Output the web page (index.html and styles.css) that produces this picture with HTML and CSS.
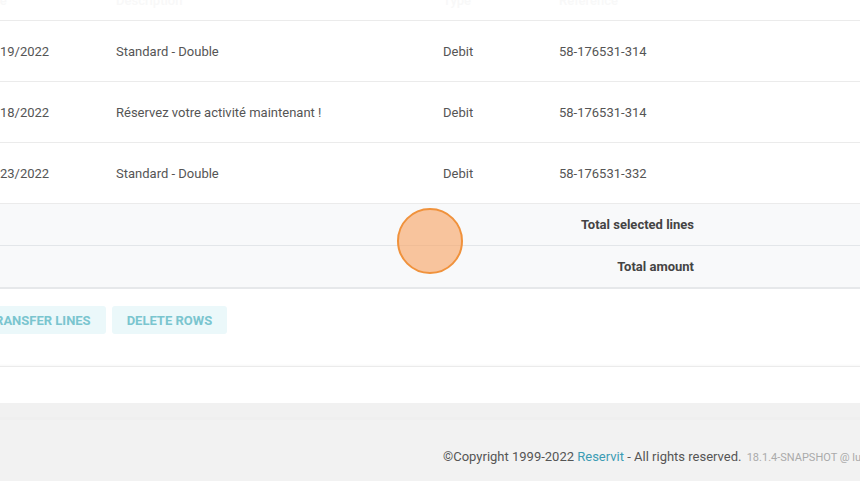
FILE: index.html
```html
<!DOCTYPE html>
<html lang="en">
<head>
  <meta charset="UTF-8" />
  <meta name="viewport" content="width=device-width, initial-scale=1.0"/>
  <title>Invoice lines</title>

  <link rel="stylesheet" href="styles.css">
</head>

<body>
  <div class="page">
    <div class="content">
      <div class="lines">
        <div class="row head">
          <div class="cell">Date</div>
          <div class="cell">Description</div>
          <div class="cell">Type</div>
          <div class="cell">Reference</div>
          <div class="cell"></div>
        </div>
        <div class="row">
          <div class="cell">05/19/2022</div>
          <div class="cell">Standard - Double</div>
          <div class="cell">Debit</div>
          <div class="cell">58-176531-314</div>
          <div class="cell"></div>
        </div>
        <div class="row">
          <div class="cell">05/18/2022</div>
          <div class="cell">Réservez votre activité maintenant !</div>
          <div class="cell">Debit</div>
          <div class="cell">58-176531-314</div>
          <div class="cell"></div>
        </div>
        <div class="row">
          <div class="cell">05/23/2022</div>
          <div class="cell">Standard - Double</div>
          <div class="cell">Debit</div>
          <div class="cell">58-176531-332</div>
          <div class="cell"></div>
        </div>

        <div class="totals">
          <div class="total-row">
            <div class="total-label">Total selected lines</div>
            <div class="total-value"></div>
          </div>
          <div class="total-row">
            <div class="total-label">Total amount</div>
            <div class="total-value"></div>
          </div>
        </div>
      </div>

      <div class="actions">
        <button class="btn-soft">Transfer lines</button>
        <button class="btn-soft">Delete rows</button>
      </div>

      <div class="card-end"></div>
    </div>

    <footer class="footer">
      <span>©Copyright 1999-2022 <a href="#">Reservit</a> - All rights reserved.</span>
      <span class="version">18.1.4-SNAPSHOT @ lum-app-02</span>
    </footer>
  </div>

  <!-- click marker -->
  <div class="click-dot"></div>
</body>
</html>
```

FILE: styles.css
```css
html, body {
  margin: 0;
  padding: 0;
  overflow: hidden;
}

body {
  font-family: Roboto, "Liberation Sans", Arial, sans-serif;
  font-size: 13px;
  color: #555;
  background: #f2f2f2;
  width: 860px;
  height: 481px;
}

.page {
  margin-left: -32px;
  width: 1100px;
}

.content {
  background: #fff;
}

/* Lines table */
.lines {
  margin-top: -20px;
}

.row {
  display: grid;
  grid-template-columns: 136px 327px 116px 200px 1fr;
  height: 60px;
  border-bottom: 1px solid #ebebeb;
  align-items: center;
}

.row.head {
  height: 40px;
  color: #f8f8f8;
  font-weight: 500;
}

.cell {
  padding: 0 12px;
  white-space: nowrap;
}

.totals {
  background: #f8f9fa;
  border-bottom: 2px solid #e6e8ea;
}

.total-row {
  display: grid;
  grid-template-columns: 738px 1fr;
  height: 41px;
  align-items: center;
  font-weight: 700;
  color: #444;
}

.total-row + .total-row {
  border-top: 1px solid #e3e6e9;
}

.total-label {
  text-align: right;
  padding-right: 12px;
}

/* Action buttons */
.actions {
  display: flex;
  gap: 6px;
  padding: 17px 0 32px 4px;
}

.btn-soft {
  font-family: inherit;
  font-size: 13px;
  font-weight: 700;
  text-transform: uppercase;
  color: #7ac5cf;
  background: #ebf8fa;
  border: none;
  border-radius: 3px;
  height: 28px;
  padding: 0 15px;
  cursor: pointer;
}

.card-end {
  border-top: 1px solid #ebebeb;
  height: 36px;
  box-shadow: 0 -1px 2px rgba(0, 0, 0, 0.03);
}

/* Footer */
.footer {
  border-top: 14px solid #f1f1f1;
  box-shadow: inset 0 3px 0 #efefef;
  padding: 32px 0 20px 475px;
  white-space: nowrap;
  color: #555;
  font-size: 13px;
}

.footer a {
  color: #3c9cb4;
  text-decoration: none;
}

.version {
  font-size: 11px;
  color: #aaa;
  margin-left: 2px;
}

.click-dot {
  position: absolute;
  left: 397px;
  top: 208px;
  width: 62px;
  height: 62px;
  border-radius: 50%;
  background: rgba(247, 168, 108, 0.65);
  border: 2px solid #f0923c;
}
```
